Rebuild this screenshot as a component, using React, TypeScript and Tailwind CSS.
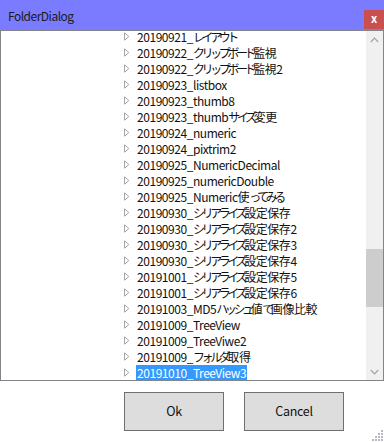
import React from "react";

const items = [
  "20190921_レイアウト",
  "20190922_クリップボード監視",
  "20190922_クリップボード監視2",
  "20190923_listbox",
  "20190923_thumb8",
  "20190923_thumbサイズ変更",
  "20190924_numeric",
  "20190924_pixtrim2",
  "20190925_NumericDecimal",
  "20190925_numericDouble",
  "20190925_Numeric使ってみる",
  "20190930_シリアライズ設定保存",
  "20190930_シリアライズ設定保存2",
  "20190930_シリアライズ設定保存3",
  "20190930_シリアライズ設定保存4",
  "20191001_シリアライズ設定保存5",
  "20191001_シリアライズ設定保存6",
  "20191003_MD5ハッシュ値で画像比較",
  "20191009_TreeView",
  "20191009_TreeViwe2",
  "20191009_フォルダ取得",
  "20191010_TreeView3",
];

const font = { fontFamily: '"Noto Sans CJK JP", sans-serif' };

function Label({ text }: { text: string }) {
  const parts = text.split(/([\u3040-\u30ff]+)/).filter((p) => p.length > 0);
  return (
    <>
      {parts.map((p, i) =>
        /^[\u3040-\u30ff]+$/.test(p) ? (
          <span key={i} className="tracking-[-3.4px]">
            {p}
          </span>
        ) : (
          <span key={i}>{p}</span>
        )
      )}
    </>
  );
}

function Arrow() {
  return (
    <svg width="6" height="9" viewBox="0 0 6 9" className="shrink-0">
      <path d="M0.5 0.8 L4.8 4.5 L0.5 8.2 Z" fill="none" stroke="#a6a6a6" strokeWidth="1" />
    </svg>
  );
}

function Grip() {
  const dots: [number, number][] = [
    [9, 0],
    [6, 3], [9, 3],
    [3, 6], [6, 6], [9, 6],
    [0, 9], [3, 9], [6, 9], [9, 9],
  ];
  return (
    <svg width="12" height="12" viewBox="0 0 12 12">
      {dots.map(([x, y], i) => (
        <rect key={i} x={x + 1} y={y + 1} width="2" height="2" fill="#b8b8c8" />
      ))}
    </svg>
  );
}

export default function App() {
  return (
    <div className="w-[384px] h-[442px] bg-white flex flex-col overflow-hidden relative" style={font}>
      <div className="h-[30px] bg-[#7b7bff] flex items-start justify-between shrink-0">
        <span className="text-[12px] leading-[16px] tracking-[-0.5px] text-[#1a1a1a] pl-[8px] pt-[8px]">
          FolderDialog
        </span>
        <div className="mt-[10px] w-[20px] h-[19px] bg-[#c9504f] flex items-center justify-center text-white text-[11px] font-bold leading-none pb-[2px]">
          x
        </div>
      </div>
      <div className="h-[351px] border border-[#82858a] flex shrink-0">
        <div className="flex-1 overflow-hidden">
          <div className="mt-[-3px] flex flex-col">
            {items.map((t, i) => {
              const sel = i === items.length - 1;
              return (
                <div key={i} className="h-[16px] flex items-center pl-[123px] overflow-hidden">
                  <Arrow />
                  <span
                    className={
                      "ml-[6px] text-[12px] leading-[15px] px-[1px] whitespace-nowrap tracking-[-0.45px] " +
                      (sel ? "bg-[#3399ff] text-white" : "text-[#111111]")
                    }
                  >
                    <Label text={t} />
                  </span>
                </div>
              );
            })}
          </div>
        </div>
        <div className="w-[17px] bg-[#f0f0f0] flex flex-col items-center">
          <div className="h-[17px] w-full flex items-center justify-center">
            <svg width="9" height="6" viewBox="0 0 9 6">
              <path d="M0.8 5 L4.5 1.2 L8.2 5" fill="none" stroke="#a3a3a3" strokeWidth="1.2" />
            </svg>
          </div>
          <div className="h-[201px]" />
          <div className="h-[58px] w-full bg-[#cdcdcd]" />
          <div className="flex-1" />
          <div className="h-[17px] w-full flex items-center justify-center">
            <svg width="9" height="6" viewBox="0 0 9 6">
              <path d="M0.8 1 L4.5 4.8 L8.2 1" fill="none" stroke="#a3a3a3" strokeWidth="1.2" />
            </svg>
          </div>
        </div>
      </div>
      <div className="flex justify-end gap-[20px] pr-[40px] pt-[11px]">
        <button className="w-[100px] h-[39px] bg-[#dddddd] border border-[#707070] text-[12.5px] tracking-[-0.3px] text-[#111111]">
          Ok
        </button>
        <button className="w-[100px] h-[39px] bg-[#dddddd] border border-[#707070] text-[12.5px] tracking-[-0.3px] text-[#111111]">
          Cancel
        </button>
      </div>
      <div className="absolute right-[1px] bottom-[1px]">
        <Grip />
      </div>
    </div>
  );
}
